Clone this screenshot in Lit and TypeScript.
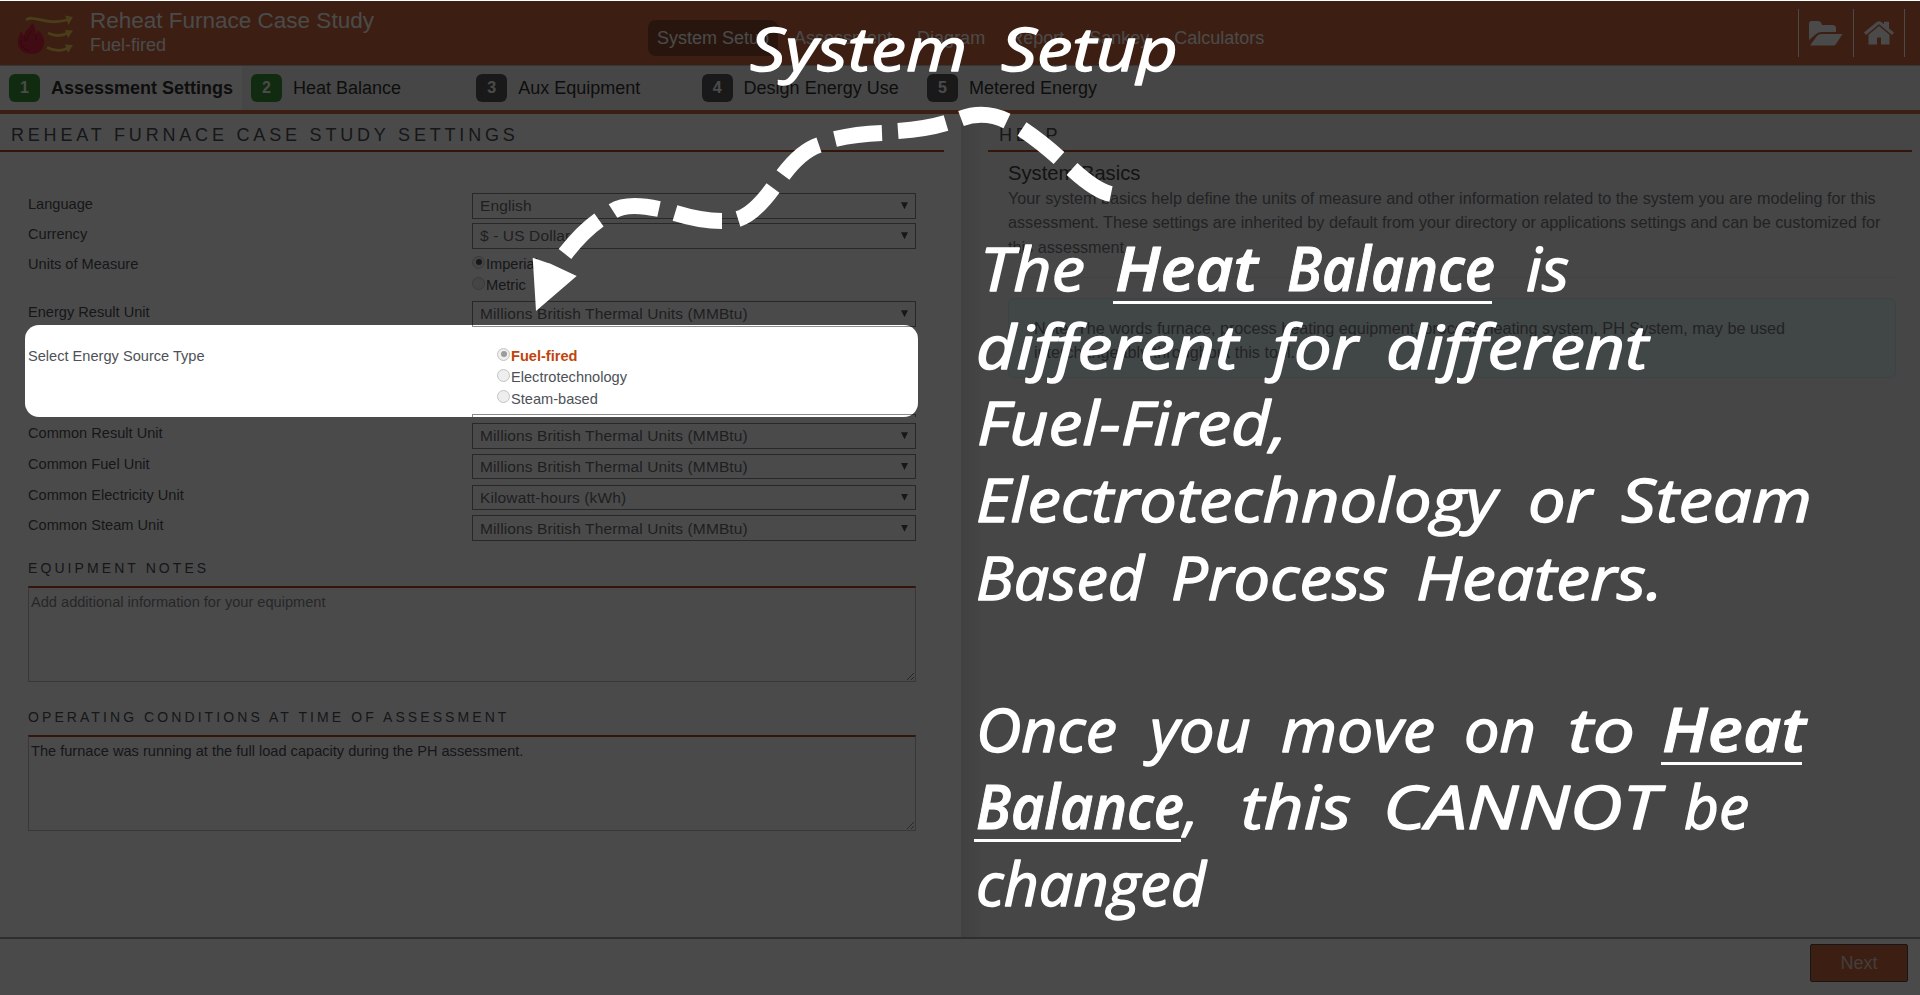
import { LitElement, html, css, svg } from "lit";
import { customElement } from "lit/decorators.js";

type Word = { t: string; x: number; w: number; b?: boolean };
type Line = { y: number; words: Word[] };

const LINES: Line[] = [
  { y: 71, words: [{ t: "System", x: 750, w: 217 }, { t: "Setup", x: 1001, w: 177 }] },
  { y: 291, words: [{ t: "The", x: 980, w: 105 }, { t: "Heat", x: 1115, w: 143, b: true }, { t: "Balance", x: 1287, w: 208, b: true }, { t: "is", x: 1526, w: 43 }] },
  { y: 369, words: [{ t: "different", x: 976, w: 262 }, { t: "for", x: 1273, w: 85 }, { t: "different", x: 1386, w: 262 }] },
  { y: 445, words: [{ t: "Fuel-Fired,", x: 977, w: 310 }] },
  { y: 522, words: [{ t: "Electrotechnology", x: 976, w: 521 }, { t: "or", x: 1528, w: 64 }, { t: "Steam", x: 1621, w: 191 }] },
  { y: 600, words: [{ t: "Based", x: 976, w: 168 }, { t: "Process", x: 1171, w: 217 }, { t: "Heaters.", x: 1416, w: 247 }] },
  { y: 752, words: [{ t: "Once", x: 976, w: 141 }, { t: "you", x: 1150, w: 101 }, { t: "move", x: 1281, w: 154 }, { t: "on", x: 1464, w: 72 }, { t: "to", x: 1568, w: 67 }, { t: "Heat", x: 1662, w: 144, b: true }] },
  { y: 829, words: [{ t: "Balance", x: 976, w: 208, b: true }, { t: ",", x: 1184, w: 14 }, { t: "this", x: 1241, w: 110 }, { t: "CANNOT", x: 1383, w: 276 }, { t: "be", x: 1684, w: 65 }] },
  { y: 906, words: [{ t: "changed", x: 976, w: 230 }] },
];

const DASHES = [
  "M1111 194Q1096 191 1072 169",
  "M1059 158Q1040 141 1022 129",
  "M1007 121Q984 110 961 118.6",
  "M946 123Q926 129 898 131",
  "M882 133Q856 134 835 139",
  "M819 145Q801 151 783 175",
  "M773 188Q754 214 738 219",
  "M722 221Q701 221 675 213",
  "M659 209Q627 202 613 211",
  "M599 220Q582 232 565 254",
];

@customElement("app-root")
export class AppRoot extends LitElement {
  static styles = css`
    :host { display: block; width: 1920px; height: 995px; background: #fff; font-family: "Liberation Sans", Arial, sans-serif; color: #4d5157; }
    * { box-sizing: border-box; }
    .page { position: relative; overflow: hidden; width: 1920px; height: 995px; display: flex; flex-direction: column; }
    .shell { padding-top: 1px; background: #fff; }
    .header { height: 64px; background: #cf673e; display: flex; align-items: center; color: #fff; }
    .brand { display: flex; width: 648px; padding-left: 16px; }
    .logo { width: 58px; height: 42px; margin-top: 3px; }
    .titles { padding-left: 16px; margin-top: -2px; }
    .title { font-size: 22.5px; line-height: 24px; padding-bottom: 2px; white-space: nowrap; }
    .sub { font-size: 18px; line-height: 20px; }
    .tabs { display: flex; flex: 1; font-size: 18px; gap: 7px; padding-top: 9px; }
    .tab { line-height: 36px; padding: 0 9px; border-radius: 8px; }
    .tab.on { background: #8b4a32; }
    .tools { display: flex; height: 48px; width: 107px; margin-right: 15px; border-left: 1px solid #fff; border-right: 1px solid #fff; }
    .tool { flex: 1; display: flex; align-items: center; justify-content: center; }
    .tool + .tool { border-left: 1px solid #fff; flex: 0 0 51px; }
    .steps { height: 49px; display: flex; background: #f1f1f1; border-bottom: 4px solid #cf673e; border-top: 1px solid #bbb; }
    .step { width: 225.3px; display: flex; align-items: center; padding-left: 9px; font-size: 18px; color: #333; }
    .step.first { width: 242px; font-weight: bold; background: #fff; }
    .num { width: 31px; height: 28px; border-radius: 6px; background: #585858; color: #fff; font-weight: bold; font-size: 16px; line-height: 28px; text-align: center; margin-right: 11px; }
    .num.ok { background: #389334; }
    .main { flex: 1; display: flex; min-height: 0; }
    .left { flex: none; width: 961px; height: 823px; padding-top: 9px; }
    .right { flex: 1; min-width: 0; height: 823px; padding: 9px 8px 0 27px; background: linear-gradient(90deg, #dedede, #f1f1f1 24px); }
    .ptitle { height: 29px; line-height: 24px; font-size: 18px; letter-spacing: 3.81px; white-space: nowrap; border-bottom: 2px solid #b4491f; padding-left: 11px; width: 944px; }
    .right .ptitle { width: auto; }
    .form { padding: 41px 0 0 28px; width: 916px; font-size: 14.6px; }
    .row { display: flex; height: 30px; line-height: 22px; }
    .row > :first-child { width: 444px; }
    .units { height: 48px; }
    .energy { height: 44px; }
    .source { height: 69px; }
    .source .radios { padding-left: 25px; }
    .common { height: 30.8px; }
    .common > :first-child { line-height: 20px; }
    .select { flex: 1; height: 25.5px; border: 1px solid #8b8b8b; padding: 0 7px; font-size: 15.5px; line-height: 23px; display: flex; justify-content: space-between; align-items: center; color: #6a6d71; letter-spacing: 0.12px; white-space: nowrap; }
    .caret { width: 7px; height: 7px; background: #4d5157; clip-path: polygon(0 0, 100% 0, 50% 100%); }
    .peek { margin-left: 444px; height: 3px; border: 1px solid #8b8b8b; border-bottom: 0; margin-bottom: 6px; }
    .radio { display: flex; height: 21.4px; line-height: 22px; white-space: nowrap; }
    .dot { width: 13px; height: 13px; border-radius: 50%; border: 1px solid #c4c4c4; background: #eee; margin: 2.5px 1px 0 0; display: flex; align-items: center; justify-content: center; }
    .dot.on::after { content: ""; width: 6px; height: 6px; border-radius: 50%; background: #9b9b9b; }
    .units .dot.on::after { background: #4d5157; }
    .hot { font-weight: bold; color: #c0440c; }
    .ntitle { font-size: 14px; letter-spacing: 3.08px; line-height: 20px; padding-top: 12px; height: 40px; white-space: nowrap; }
    .area { position: relative; height: 96px; border: 1px solid #c2c2c2; border-top: 2px solid #b4491f; padding: 3px 2px; line-height: 22px; margin-bottom: 13px; }
    .grip { position: absolute; right: 1px; bottom: 1px; width: 8px; height: 8px; }
    .empty { color: #85888c; }
    .help { padding: 8px 16px 0 20px; font-size: 16.2px; line-height: 24.3px; color: #75787c; white-space: nowrap; }
    .basics { font-size: 20.2px; line-height: 26px; color: #444; }
    .rule { height: 1px; background: #e2e2e2; margin: 18px 0 20px; }
    .note { height: 80px; background: #e0f2f2; border: 1px solid #d0e6e9; border-radius: 6px; padding: 17px 25px; color: #75787c; }
    .footer { height: 58px; border-top: 2px solid #9e9e9e; display: flex; justify-content: flex-end; padding: 5px 12px 0 0; background: #fff; }
    .next { width: 98px; height: 38px; border: 1px solid #4d4d4d; border-radius: 2px; background: #cf673e; color: #e5d5cf; font-size: 18px; line-height: 37px; text-align: center; }
    .veil { position: absolute; inset: 1px 0 0 0; overflow: hidden; }
    .focus { position: absolute; left: 25px; top: 324px; width: 893px; height: 92px; border-radius: 14px; box-shadow: 0 0 0 2200px rgba(0, 0, 0, 0.71); }
    .callout { position: absolute; inset: 0; width: 1920px; height: 995px; }
    .hand { font-family: "Open Sans", "Noto Sans", sans-serif; font-style: italic; font-size: 61px; font-variant-ligatures: none; fill: #fff; stroke: #fff; stroke-width: 1.4px; stroke-linejoin: round; }
    .strong { font-weight: 600; stroke-width: 1px; }
    .dash { fill: none; stroke: #fff; stroke-width: 16; }
  `;

  select(label: string, value: string, cls = "") {
    return html`<div class="row ${cls}"><span>${label}</span><div class="select"><span>${value}</span><i class="caret"></i></div></div>`;
  }

  radio(label: string, on = false, hot = false) {
    return html`<div class="radio"><span class="dot ${on ? "on" : ""}"></span><span class=${hot ? "hot" : ""}>${label}</span></div>`;
  }

  step(n: number, label: string) {
    return html`<div class="step ${n === 1 ? "first" : ""}"><span class="num ${n < 3 ? "ok" : ""}">${n}</span>${label}</div>`;
  }

  grip() {
    return html`<svg class="grip" viewBox="0 0 8 8"><path d="M1 8L8 1M5 8L8 5" stroke="#888" stroke-width="1" /></svg>`;
  }

  render() {
    const mm = "Millions British Thermal Units (MMBtu)";
    return html`
      <div class="page">
        <div class="shell">
          <div class="header">
            <div class="brand">
              <svg class="logo" viewBox="16 11 58 42">
                <g fill="none" stroke="#fad25a" stroke-width="2.8">
                  <path d="M26 17C34 11 45 23 67 17" />
                  <path d="M48 30Q58 35 68 30" />
                  <path d="M47 44.500Q58 50 68 45" />
                </g>
                <g fill="#fad25a"><path d="M65 12.500L73 14L68.500 22Z" /><path d="M65 27L73 27.500L68 35Z" /><path d="M65 41.500L73 42L68 50Z" /></g>
                <path fill="#e02845" d="M30 51C22 50 17 45 18 37C18.500 33 20 30 21 28L24 33C24 27 31 25 32 20C35 23 36 28 36 31L38 27C43 32 45 37 44 41C43 48 38 51 30 51Z" />
                <path fill="none" stroke="#8e2232" stroke-width="1" d="M21 37Q20 45 29 48M24 33L26 38L31 28M36 31L36 38" />
              </svg>
              <div class="titles"><div class="title">Reheat Furnace Case Study</div><div class="sub">Fuel-fired</div></div>
            </div>
            <div class="tabs">
              <span class="tab on">System Setup</span><span class="tab">Assessment</span><span class="tab">Diagram</span><span class="tab">Report</span><span class="tab">Sankey</span><span class="tab">Calculators</span>
            </div>
            <div class="tools">
              <div class="tool"><svg width="36" height="26" viewBox="0 0 36 26" fill="#fff"><path d="M1 20V3.500Q1 1 3.500 1H10Q13 1 14 5H25Q28 5.500 28 8V12H14Q10 12 8 14Z" /><path d="M13.500 14H34.500L28 24Q27 25.500 25 25.500H2L9 16Q10.500 14 13.500 14Z" /></svg></div>
              <div class="tool"><svg width="30" height="24" viewBox="0 0 30 24" fill="#fff"><path d="M0 11.500L13 .8Q15 -.5 17 .8L20 3.300V.8H25V7.500L30 11.500L28 14L15 3.200L2 14Z" /><path d="M4.500 13.700L15 5L25.500 13.700V23.500H17V16.500H13V23.500H4.500Z" /></svg></div>
            </div>
          </div>
          <div class="steps">${["Assessment Settings", "Heat Balance", "Aux Equipment", "Design Energy Use", "Metered Energy"].map((s, i) => this.step(i + 1, s))}</div>
        </div>
        <div class="main">
          <div class="left">
            <div class="ptitle">REHEAT FURNACE CASE STUDY SETTINGS</div>
            <div class="form">
              ${this.select("Language", "English")}
              ${this.select("Currency", "$ - US Dollar")}
              <div class="row units"><span>Units of Measure</span><div>${this.radio("Imperial", true)}${this.radio("Metric")}</div></div>
              ${this.select("Energy Result Unit", mm, "energy")}
              <div class="row source"><span>Select Energy Source Type</span><div class="radios">${this.radio("Fuel-fired", true, true)}${this.radio("Electrotechnology")}${this.radio("Steam-based")}</div></div>
              <div class="peek"></div>
              ${this.select("Common Result Unit", mm, "common")}
              ${this.select("Common Fuel Unit", mm, "common")}
              ${this.select("Common Electricity Unit", "Kilowatt-hours (kWh)", "common")}
              ${this.select("Common Steam Unit", mm, "common")}
              <div class="ntitle">EQUIPMENT NOTES</div>
              <div class="area empty">Add additional information for your equipment${this.grip()}</div>
              <div class="ntitle">OPERATING CONDITIONS AT TIME OF ASSESSMENT</div>
              <div class="area">The furnace was running at the full load capacity during the PH assessment.${this.grip()}</div>
            </div>
          </div>
          <div class="right">
            <div class="ptitle">HELP</div>
            <div class="help">
              <div class="basics">System Basics</div>
              <div>Your system basics help define the units of measure and other information related to the system you are modeling for this<br />assessment. These settings are inherited by default from your directory or applications settings and can be customized for<br />this assessment.</div>
              <div class="rule"></div>
              <div class="note">Note: The words furnace, process heating equipment, process heating system, PH System, may be used<br />interchangeably throughout this tool.</div>
            </div>
          </div>
        </div>
        <div class="footer"><div class="next">Next</div></div>
        <div class="veil"><div class="focus"></div></div>
        <svg class="callout" viewBox="0 0 1920 995">
          ${DASHES.map((d) => svg`<path class="dash" d=${d} />`)}
          <path d="M532.700 257.700L548 263L550 263.500L576.700 276L536 311Z" fill="#fff" />
          ${LINES.map((l) => svg`<text class="hand" y=${l.y}>${l.words.map((w) => svg`<tspan class=${w.b ? "strong" : ""} x=${w.x} textLength=${w.w} lengthAdjust="spacingAndGlyphs">${w.t}</tspan> `)}</text>`)}
          <g fill="#fff"><rect x="1113" y="301" width="379" height="3" /><rect x="1661" y="762" width="141" height="3" /><rect x="974" y="839" width="207" height="3" /></g>
        </svg>
      </div>`;
  }
}
